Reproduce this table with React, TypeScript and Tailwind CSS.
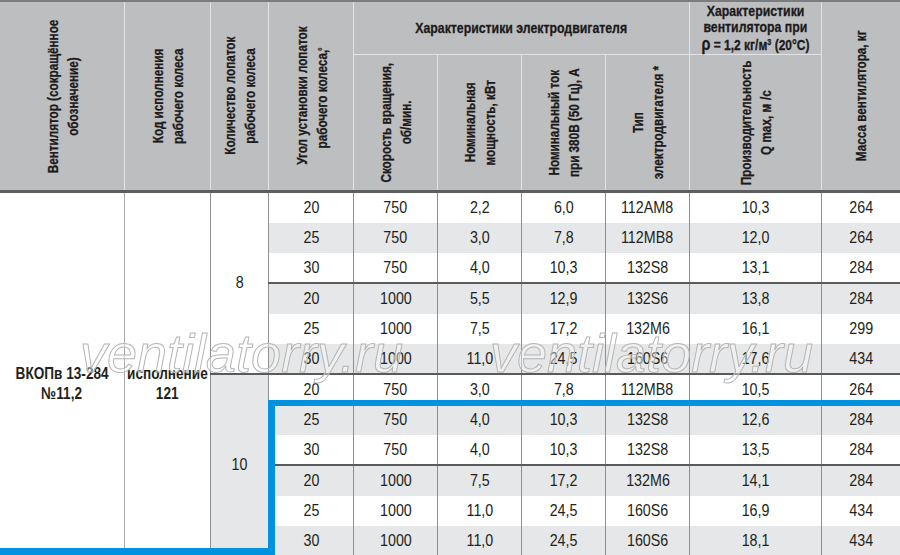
import React from 'react';

// --- column grid (shared by header and body) ---
const COLS = 'grid grid-cols-[124px_86px_58px_85px_84px_84px_84px_84px_132px_79px]';
const FONT = "font-['Liberation_Sans',Arial,sans-serif]";

const ROWS: string[][] = [
  ['20', '750', '2,2', '6,0', '112AM8', '10,3', '264'],
  ['25', '750', '3,0', '7,8', '112MB8', '12,0', '264'],
  ['30', '750', '4,0', '10,3', '132S8', '13,1', '284'],
  ['20', '1000', '5,5', '12,9', '132S6', '13,8', '284'],
  ['25', '1000', '7,5', '17,2', '132M6', '16,1', '299'],
  ['30', '1000', '11,0', '24,5', '160S6', '17,6', '434'],
  ['20', '750', '3,0', '7,8', '112MB8', '10,5', '264'],
  ['25', '750', '4,0', '10,3', '132S8', '12,6', '284'],
  ['30', '750', '4,0', '10,3', '132S8', '13,5', '284'],
  ['20', '1000', '7,5', '17,2', '132M6', '14,1', '284'],
  ['25', '1000', '11,0', '24,5', '160S6', '16,9', '434'],
  ['30', '1000', '11,0', '24,5', '160S6', '18,1', '434'],
];

// vertical header label, read bottom to top; squeezed along its length to look condensed
function V({ lines }: { lines: React.ReactNode[] }) {
  return (
    <div className="[writing-mode:vertical-rl] rotate-180 scale-y-[0.78] text-center leading-[19.5px] whitespace-nowrap">
      {lines.map((l, i) => <div key={i}>{l}</div>)}
    </div>
  );
}

// narrow text (condensed look)
function N({ children, bold }: { children: React.ReactNode; bold?: boolean }) {
  return <span className={bold ? 'inline-block whitespace-nowrap scale-x-[0.8]' : 'inline-block whitespace-nowrap scale-x-[0.84]'}>{children}</span>;
}

function Row({ r, i }: { r: string[]; i: number }) {
  const bg = i % 2 === 1 ? 'bg-[#e6e7e8]' : 'bg-white';
  return (
    <>
      {r.map((v, j) => (
        <div key={j} className={`${bg} border-l border-[#8e8e8e] flex items-center justify-center`}><N>{v}</N></div>
      ))}
    </>
  );
}

export default function App() {
  const hcell = 'border-l border-[#e2e3e4] flex items-center justify-center';
  return (
    <div className={`relative w-[900px] h-[555px] overflow-hidden bg-white text-[#231f20] ${FONT}`}>
      {/* header */}
      <div className={`${COLS} grid-rows-[52px_136px] h-[190px] border-t-2 border-[#7b7c7e] bg-[#bcbec0] text-[15px] font-bold text-[#1d1a1b] [-webkit-text-stroke:0.3px_#1d1a1b]`}>
        <div className="row-span-2 flex items-center justify-center"><V lines={['Вентилятор (сокращённое', 'обозначение)']} /></div>
        <div className={`row-span-2 ${hcell}`}><V lines={['Код исполнения', 'рабочего колеса']} /></div>
        <div className={`row-span-2 ${hcell}`}><V lines={['Количество лопаток', 'рабочего колеса']} /></div>
        <div className={`row-span-2 ${hcell}`}><V lines={['Угол установки лопаток', <>рабочего колеса, <sup>°</sup></>]} /></div>
        <div className={`col-span-4 ${hcell}`}><span className="inline-block whitespace-nowrap scale-x-[0.82]">Характеристики электродвигателя</span></div>
        <div className={`${hcell} flex-col leading-[16.5px] text-center`}>
          <span className="inline-block whitespace-nowrap scale-x-[0.82]">Характеристики</span>
          <span className="inline-block whitespace-nowrap scale-x-[0.82]">вентилятора при</span>
          <span className="inline-block whitespace-nowrap scale-x-[0.8]"><span className="text-[18px]">ρ</span> = 1,2 кг/м<sup className="text-[9px]">3</sup> (20°С)</span>
        </div>
        <div className={`row-span-2 ${hcell}`}><V lines={['Масса вентилятора, кг']} /></div>
        <div className={`${hcell} border-t`}><V lines={['Скорость вращения,', 'об/мин.']} /></div>
        <div className={`${hcell} border-t`}><V lines={['Номинальная', 'мощность, кВт']} /></div>
        <div className={`${hcell} border-t`}><V lines={['Номинальный ток', 'при 380В (50 Гц), А']} /></div>
        <div className={`${hcell} border-t`}><V lines={['Тип', 'электродвигателя *']} /></div>
        <div className={`${hcell} border-t`}><V lines={['Производительность', <>Q max, м<sup className="text-[9px]">3</sup>/с</>]} /></div>
      </div>
      <div className="h-[3px] bg-[#5d5e60]" />

      {/* body */}
      <div className={`${COLS} grid-rows-[30px_30px_29px_2px_30px_30px_29px_2px_30px_30px_29px_2px_30px_30px_29px] text-[17px]`}>
        <div className="row-span-15 flex flex-col items-center justify-center pt-[20px] font-bold leading-[20px]">
          <N bold>ВКОПв 13-284</N>
          <N bold>№11,2</N>
        </div>
        <div className="row-span-15 border-l border-[#a9a9a9] flex flex-col items-center justify-center pt-[20px] font-bold leading-[20px]">
          <N bold>исполнение</N>
          <N bold>121</N>
        </div>
        <div className="row-span-7 border-l border-[#8e8e8e] bg-white flex items-center justify-center"><N>8</N></div>
        {ROWS.slice(0, 3).map((r, i) => <Row key={i} r={r} i={i} />)}
        <div className="col-span-7 bg-[#5a5b5d]" />
        {ROWS.slice(3, 6).map((r, i) => <Row key={i} r={r} i={i + 3} />)}
        <div className="col-span-8 bg-[#5a5b5d]" />
        <div className="row-span-7 border-l border-[#8e8e8e] bg-[#e6e7e8] flex items-center justify-center"><N>10</N></div>
        {ROWS.slice(6, 9).map((r, i) => <Row key={i} r={r} i={i + 6} />)}
        <div className="col-span-7 bg-[#5a5b5d]" />
        {ROWS.slice(9, 12).map((r, i) => <Row key={i} r={r} i={i + 9} />)}
      </div>

      {/* watermark */}
      <div className="absolute left-[80px] top-[326px] pointer-events-none italic text-[54px] leading-none text-white/40 [-webkit-text-stroke:1px_#b5b5b5]">ventilatorry.ru</div>
      <div className="absolute left-[490px] top-[326px] pointer-events-none italic text-[54px] leading-none text-white/40 [-webkit-text-stroke:1px_#b5b5b5]">ventilatorry.ru</div>

      {/* blue highlight frame */}
      <div className="absolute left-[268px] top-[400px] w-[632px] h-[155px] border-t-[6px] border-l-[7px] border-[#0091df]" />
      <div className="absolute left-0 top-[548px] w-[275px] h-[7px] bg-[#0091df]" />
    </div>
  );
}
